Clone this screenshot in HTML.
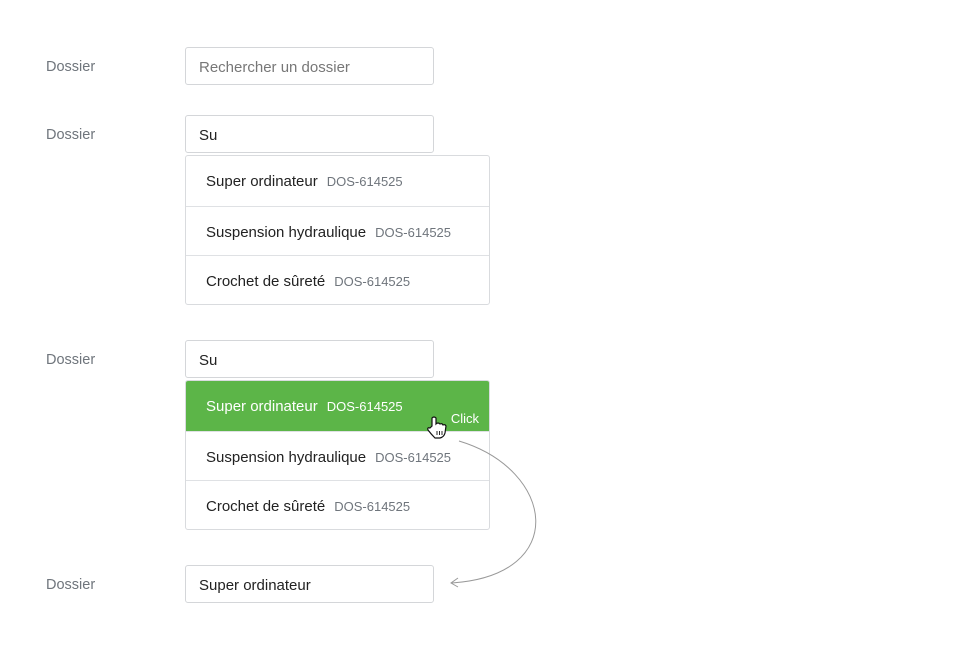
<!DOCTYPE html>
<html><head><meta charset="utf-8"><style>
body{margin:0;width:960px;height:649px;background:#fff;font-family:"Liberation Sans",sans-serif;position:relative;overflow:hidden}
.l{position:absolute;left:46px;font-size:14.5px;color:#6f757c;line-height:18px}
.in{position:absolute;left:185px;width:247px;height:36px;border:1px solid #d4d6d9;border-radius:3px;box-sizing:content-box;font-size:15px;color:#222;line-height:39px;text-indent:13px}
.dd{position:absolute;left:185px;width:303px;border:1px solid #d9dbde;border-radius:3px;overflow:hidden}
.r{height:48px;border-top:1px solid #dfe1e4;font-size:15px;color:#222;line-height:52px;padding-left:20px;position:relative}
.r:first-child{border-top:none;height:50px}
.r small{font-size:13px;color:#6f757c;margin-left:9px}
.g{background:#5cb548;color:#fff}
.g small{color:#fff}
</style></head><body>
<div class="l" style="top:58px">Dossier</div>
<div class="in" style="top:47px;color:#777">Rechercher un dossier</div>
<div class="l" style="top:126px">Dossier</div>
<div class="in" style="top:115px">Su</div>
<div class="dd" style="top:155px">
<div class="r">Super ordinateur<small>DOS-614525</small></div>
<div class="r">Suspension hydraulique<small>DOS-614525</small></div>
<div class="r">Crochet de sûreté<small>DOS-614525</small></div>
</div>
<div class="l" style="top:351px">Dossier</div>
<div class="in" style="top:340px">Su</div>
<div class="dd" style="top:380px">
<div class="r g">Super ordinateur<small>DOS-614525</small><span style="position:absolute;right:10px;top:30px;font-size:13px;line-height:16px">Click</span></div>
<div class="r">Suspension hydraulique<small>DOS-614525</small></div>
<div class="r">Crochet de sûreté<small>DOS-614525</small></div>
</div>
<div class="l" style="top:576px">Dossier</div>
<div class="in" style="top:565px">Super ordinateur</div>
<svg style="position:absolute;left:0;top:0" width="960" height="649">
<path d="M459 441 C555 470 570 575 452 583" fill="none" stroke="#999" stroke-width="1"/>
<path d="M458 578 L451 583 L458 587" fill="none" stroke="#999" stroke-width="1"/>
<path d="M432 426 L432 418 Q434 416 436 418 L436 424 Q438 422 440 424 Q442 423 443 425 Q445 424 446 426 L445 433 Q444 437 440 438 L435 438 Q431 434 428 430 Q427 427 430 428 Z" fill="#fff" stroke="#111" stroke-width="1.2"/>
<path d="M437 431v4M439.5 431v4M442 431v4" stroke="#111" stroke-width="0.9"/>
</svg>
</body></html>
